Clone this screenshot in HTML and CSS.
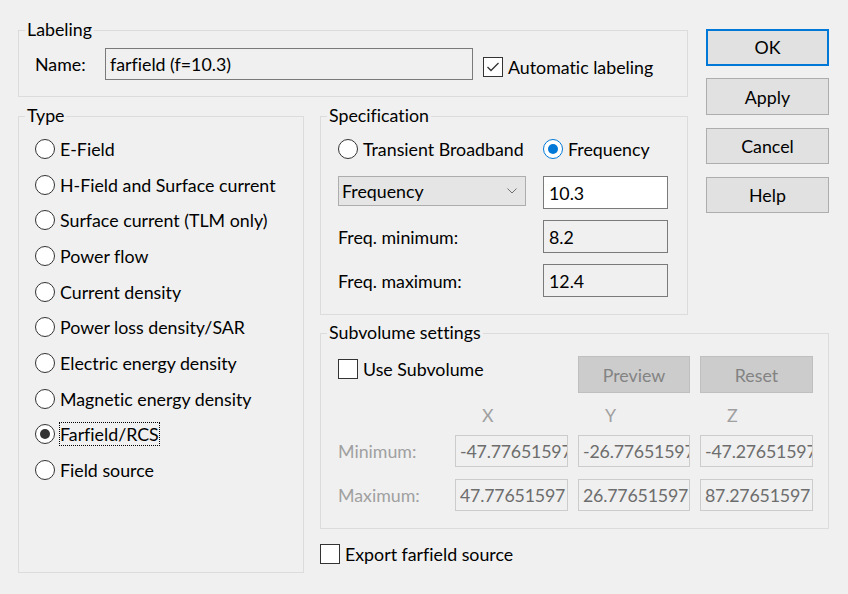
FILE: index.html
```html
<!DOCTYPE html>
<html lang="en">
<head>
<meta charset="utf-8">
<title>Farfield</title>
<link rel="stylesheet" href="styles.css">
</head>
<body>
<div class="dialog">
  <section class="group labeling">
    <span class="legend">Labeling</span>
    <span class="name-label">Name:</span>
    <div class="field name-field">farfield (f=10.3)</div>
    <div class="check auto-label">
      <span class="box"><svg viewBox="0 0 20 20" width="20" height="20"><polyline points="4.5,10 8,13.5 15.5,6"/></svg></span>
      <span>Automatic labeling</span>
    </div>
  </section>

  <div class="buttons">
    <div class="btn default">OK</div>
    <div class="btn">Apply</div>
    <div class="btn">Cancel</div>
    <div class="btn">Help</div>
  </div>

  <section class="group type">
    <span class="legend">Type</span>
    <ul class="radio-list">
      <li class="radio"><span class="circle"></span><span>E-Field</span></li>
      <li class="radio"><span class="circle"></span><span>H-Field and Surface current</span></li>
      <li class="radio"><span class="circle"></span><span>Surface current (TLM only)</span></li>
      <li class="radio"><span class="circle"></span><span>Power flow</span></li>
      <li class="radio"><span class="circle"></span><span>Current density</span></li>
      <li class="radio"><span class="circle"></span><span>Power loss density/SAR</span></li>
      <li class="radio"><span class="circle"></span><span>Electric energy density</span></li>
      <li class="radio"><span class="circle"></span><span>Magnetic energy density</span></li>
      <li class="radio"><span class="circle on"></span><span class="focus">Farfield/RCS</span></li>
      <li class="radio"><span class="circle"></span><span>Field source</span></li>
    </ul>
  </section>

  <section class="group spec">
    <span class="legend">Specification</span>
    <div class="spec-row radios-row">
      <div class="radio"><span class="circle"></span><span>Transient Broadband</span></div>
      <div class="radio"><span class="circle on blue"></span><span>Frequency</span></div>
    </div>
    <div class="spec-row gap-big">
      <div class="combo">
        <span>Frequency</span>
        <svg class="chev" viewBox="0 0 10 6" width="10" height="6"><polyline points="0.5,0.5 5,5 9.5,0.5"/></svg>
      </div>
      <div class="field value-field">10.3</div>
    </div>
    <div class="spec-row gap-small">
      <span class="row-label">Freq. minimum:</span>
      <div class="field value-field grey">8.2</div>
    </div>
    <div class="spec-row gap-small">
      <span class="row-label">Freq. maximum:</span>
      <div class="field value-field grey">12.4</div>
    </div>
  </section>

  <section class="group subvol">
    <span class="legend">Subvolume settings</span>
    <div class="sv-row sv-top">
      <div class="check use-sub">
        <span class="box"></span>
        <span>Use Subvolume</span>
      </div>
      <div class="btn disabled">Preview</div>
      <div class="btn disabled">Reset</div>
    </div>
    <div class="sv-row sv-axes">
      <span></span>
      <span class="axis">X</span>
      <span class="axis">Y</span>
      <span class="axis">Z</span>
    </div>
    <div class="sv-row sv-values first">
      <span class="dim-label">Minimum:</span>
      <div class="dim-field">-47.776515970</div>
      <div class="dim-field">-26.776515970</div>
      <div class="dim-field">-47.276515970</div>
    </div>
    <div class="sv-row sv-values">
      <span class="dim-label">Maximum:</span>
      <div class="dim-field">47.77651597</div>
      <div class="dim-field">26.77651597</div>
      <div class="dim-field">87.27651597</div>
    </div>
  </section>

  <div class="check export">
    <span class="box"></span>
    <span>Export farfield source</span>
  </div>
</div>
</body>
</html>
```
FILE: styles.css
```css
* { box-sizing: border-box; }

html, body {
  margin: 0;
  padding: 0;
  background: #f0f0f0;
}

body {
  width: 848px;
  height: 594px;
  overflow: hidden;
  font-family: "Lato", "Noto Sans", sans-serif;
  font-size: 17.8px;
  line-height: 20px;
  color: #000;
  font-variant-ligatures: none;
}

.dialog {
  display: grid;
  grid-template-columns: 286px 16px 368px 18px 123px;
  align-items: start;
  padding: 30px 0 0 18px;
}

/* group boxes */
.group {
  position: relative;
  border: 1px solid #dcdcdc;
}

.legend {
  position: absolute;
  top: -12px;
  left: 6px;
  padding: 0 2px;
  background: #f0f0f0;
  white-space: nowrap;
}

/* labeling */
.labeling {
  grid-column: 1 / 4;
  grid-row: 1;
  height: 67px;
  display: flex;
  align-items: center;
  padding: 0 0 0 16px;
}

.name-label {
  width: 70px;
}

.field {
  border: 1px solid #7a7a7a;
  background: #f0f0f0;
  padding: 0 4px;
  display: flex;
  align-items: center;
  white-space: nowrap;
  overflow: hidden;
}

.name-field {
  width: 368px;
  height: 32px;
}

.check {
  display: flex;
  align-items: center;
  gap: 5px;
  white-space: nowrap;
}

.box {
  width: 20px;
  height: 20px;
  flex: none;
  border: 1px solid #333;
  background: #fff;
  display: flex;
  align-items: center;
  justify-content: center;
}

.box svg {
  display: block;
  margin: -1px;
}

.box polyline {
  fill: none;
  stroke: #333;
  stroke-width: 1.3;
}

.auto-label {
  margin-left: 10px;
  margin-top: 6px;
}

/* buttons */
.buttons {
  grid-column: 5;
  grid-row: 1 / 3;
  margin-top: -1px;
  display: flex;
  flex-direction: column;
  gap: 12.8px;
}

.btn {
  height: 36.5px;
  background: #e1e1e1;
  border: 1px solid #adadad;
  display: flex;
  align-items: center;
  justify-content: center;
  white-space: nowrap;
}

.btn.default {
  border: 2px solid #0078d7;
}

.btn.disabled {
  height: 37px;
  background: #cccccc;
  border-color: #bfbfbf;
  color: #838383;
}

/* type */
.type {
  grid-column: 1;
  grid-row: 2 / 5;
  margin-top: 19px;
  height: 457px;
  padding: 14px 0 0 16px;
}

.radio-list {
  list-style: none;
  margin: 0;
  padding: 0;
}

.radio {
  display: flex;
  align-items: center;
  gap: 5px;
  white-space: nowrap;
}

.radio-list .radio {
  height: 35.7px;
}

.circle {
  position: relative;
  width: 20px;
  height: 20px;
  flex: none;
  border: 1px solid #333;
  border-radius: 50%;
  background: #fff;
}

.circle.on::after {
  content: "";
  position: absolute;
  left: 4px;
  top: 4px;
  width: 10px;
  height: 10px;
  border-radius: 50%;
  background: #333;
}

.circle.blue {
  border-color: #0078d7;
}

.circle.blue::after {
  background: #0078d7;
}

.focus {
  outline: 1px dotted #000;
  outline-offset: 0;
  padding: 1px 0;
  line-height: 20px;
}

/* specification */
.spec {
  grid-column: 3;
  grid-row: 2;
  margin-top: 19px;
  padding: 22px 19px 17px 17px;
}

.spec-row {
  display: grid;
  grid-template-columns: 188px 125px;
  column-gap: 17px;
  align-items: center;
}

.radios-row {
  height: 20px;
}

.gap-big {
  margin-top: 17px;
  align-items: start;
}

.gap-small {
  margin-top: 11px;
}

.combo {
  height: 30px;
  background: #e5e5e5;
  border: 1px solid #adadad;
  display: flex;
  align-items: center;
  justify-content: space-between;
  padding: 0 8px 0 3px;
}

.chev polyline {
  fill: none;
  stroke: #707070;
  stroke-width: 1;
}

.value-field {
  height: 33px;
  background: #fff;
  padding-left: 5px;
}

.value-field.grey {
  background: #f0f0f0;
}

/* subvolume */
.subvol {
  grid-column: 3 / 6;
  grid-row: 3;
  margin-top: 18px;
  padding: 22px 15px 17px 17px;
}

.sv-row {
  display: grid;
  grid-template-columns: 107px 113px 112px 113px;
  column-gap: 10px;
  align-items: center;
}

.sv-top {
  align-items: start;
}

.use-sub {
  grid-column: 1 / 3;
  margin-top: 3px;
}

.sv-axes {
  margin-top: 12px;
  height: 20px;
  color: #a0a0a0;
}

.axis {
  padding-left: 27px;
}

.sv-values {
  margin-top: 12px;
}

.sv-values.first {
  margin-top: 10px;
}

.dim-label {
  color: #a0a0a0;
}

.dim-field {
  height: 32px;
  border: 1px solid #cccccc;
  background: #f0f0f0;
  color: #6d6d6d;
  padding: 0 0 0 4px;
  display: flex;
  align-items: center;
  white-space: nowrap;
  overflow: hidden;
  letter-spacing: -0.2px;
}

/* export */
.export {
  grid-column: 3 / 6;
  grid-row: 4;
  margin-top: 15px;
  margin-bottom: 12px;
}
```
